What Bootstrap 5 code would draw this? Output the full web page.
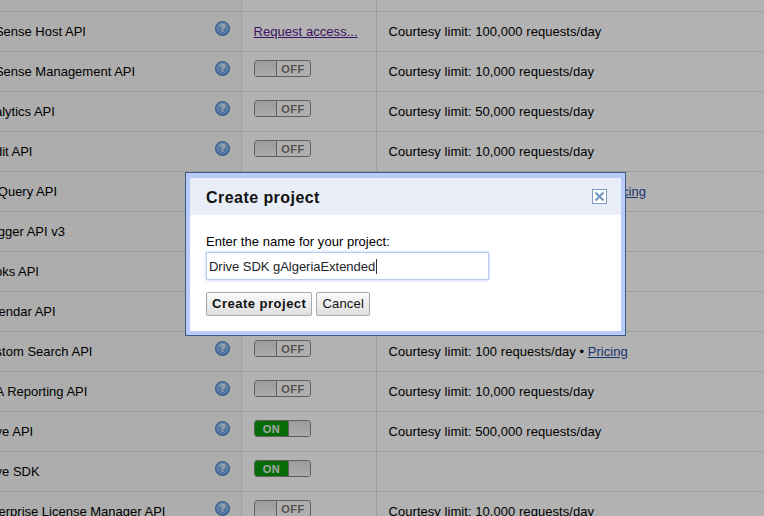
<!DOCTYPE html>
<html lang="en">
<head>
    <meta charset="UTF-8">
    <title>Services</title>
    <link href="https://cdn.jsdelivr.net/npm/bootstrap@5.3.3/dist/css/bootstrap.min.css" rel="stylesheet">
    <script src="https://cdn.jsdelivr.net/npm/bootstrap@5.3.3/dist/js/bootstrap.bundle.min.js"></script>
    <style>
        html, body { height: 100%; overflow: hidden; background: #fff; }
        body { font-family: "Liberation Sans", Arial, sans-serif; font-size: 13px; color: #000; }

        .api-table { width: 800px; margin: 0 0 0 -20px; border-collapse: collapse; table-layout: fixed; letter-spacing: .05px; }
        .api-table td { height: 40px; padding: 0; border-bottom: 1px solid #e2e2e2; border-right: 1px solid #e2e2e2; vertical-align: top; }
        .api-table tr.top-row td { height: 11px; padding: 0; }
        .api-table .name-cell { width: 261px; background: #f8f8f8; position: relative; padding: 10px 0 0 0; text-indent: -1px; letter-spacing: 0; }
        .api-table .state-cell { width: 135px; padding: 8px 0 0 12px; }
        .api-table .limit-cell { padding: 10px 0 0 12px; border-right: 0; }

        .help-ico { position: absolute; left: 235px; top: 9px; width: 15px; height: 15px; }

        .api-toggle { display: flex; width: 57px; height: 17px; border: 1px solid #8a8a8a; border-radius: 3px; overflow: hidden; font-size: 11px; font-weight: bold; line-height: 16px; letter-spacing: .5px; background: #fbfbfb; }
        .api-toggle .knob { width: 22px; background: linear-gradient(#dedede, #f6f6f6); border-right: 1px solid #8a8a8a; }
        .api-toggle .lbl { flex-grow: 1; text-align: center; color: #777; }
        .api-toggle.is-on .lbl { background: #0a9c0a; color: #ececec; flex-grow: 0; width: 35px; }
        .api-toggle.is-on .knob { flex-grow: 1; border-right: 0; border-left: 1px solid #8a8a8a; }
        .limit-cell a { color: #2a4f9e; }
        .state-cell a { color: #551a8b; }
        .state-cell .req-link { display: block; margin-top: 2px; }

        .page-shade { position: fixed; inset: 0; background: rgba(0, 0, 0, .3); }

        .project-dlg { position: fixed; left: 185px; top: 172px; width: 441px; height: 164px; background: #fff; border: 1px solid #3d5a80; box-shadow: inset 0 0 0 4px #b9cbfb, inset 0 5px 0 #b9cbfb; padding: 5px 4px 4px; }
        .dlg-head { height: 37px; background: #e8edf8; padding: 2px 14px 0 16px; }
        .dlg-title { font-size: 16px; font-weight: bold; margin: 0; letter-spacing: .45px; color: #111; }
        .dlg-close { width: 15px; height: 15px; padding: 0; border: 1px solid #7b9cc4; background: #fff; display: flex; margin-top: -2px; }
        .dlg-body { padding: 19px 16px 0; }
        .dlg-body label { display: block; margin-bottom: 3px; line-height: 15px; letter-spacing: .03px; }
        .name-input { width: 283px; height: 28px; padding: 0 2px; border: 1px solid #b9cbe8; box-shadow: 0 0 3px #b9cbfb; line-height: 27px; font-size: 13px; border-radius: 0; letter-spacing: -.03px; }
        .name-input span { border-right: 1px solid #333; padding-right: 1px; }
        .dlg-btn { height: 24px; padding: 0 5px; font-size: 13px; line-height: 22px; color: #111; background: linear-gradient(#fafafa, #dedede); border: 1px solid #aaa; border-radius: 2px; letter-spacing: .2px; }
        .dlg-btn.main { font-weight: bold; letter-spacing: .5px; }
    </style>
</head>
<body>

<table class="api-table">
    <tr class="top-row"><td class="name-cell"></td><td class="state-cell"></td><td class="limit-cell"></td></tr>
    <tr>
        <td class="name-cell">AdSense Host API <svg class="help-ico"><use href="#help"/></svg></td>
        <td class="state-cell"><a class="req-link" href="#">Request access...</a></td>
        <td class="limit-cell">Courtesy limit: 100,000 requests/day</td>
    </tr>
    <tr>
        <td class="name-cell">AdSense Management API <svg class="help-ico"><use href="#help"/></svg></td>
        <td class="state-cell"><div class="api-toggle"><div class="knob"></div><div class="lbl">OFF</div></div></td>
        <td class="limit-cell">Courtesy limit: 10,000 requests/day</td>
    </tr>
    <tr>
        <td class="name-cell">Analytics API <svg class="help-ico"><use href="#help"/></svg></td>
        <td class="state-cell"><div class="api-toggle"><div class="knob"></div><div class="lbl">OFF</div></div></td>
        <td class="limit-cell">Courtesy limit: 50,000 requests/day</td>
    </tr>
    <tr>
        <td class="name-cell">Audit API <svg class="help-ico"><use href="#help"/></svg></td>
        <td class="state-cell"><div class="api-toggle"><div class="knob"></div><div class="lbl">OFF</div></div></td>
        <td class="limit-cell">Courtesy limit: 10,000 requests/day</td>
    </tr>
    <tr>
        <td class="name-cell">BigQuery API</td>
        <td class="state-cell"></td>
        <td class="limit-cell">Courtesy limit: 10,000 requests/day • <a href="#">Pricing</a></td>
    </tr>
    <tr>
        <td class="name-cell">Blogger API v3</td>
        <td class="state-cell"></td>
        <td class="limit-cell"></td>
    </tr>
    <tr>
        <td class="name-cell">Books API</td>
        <td class="state-cell"></td>
        <td class="limit-cell"></td>
    </tr>
    <tr>
        <td class="name-cell">Calendar API</td>
        <td class="state-cell"></td>
        <td class="limit-cell"></td>
    </tr>
    <tr>
        <td class="name-cell">Custom Search API <svg class="help-ico"><use href="#help"/></svg></td>
        <td class="state-cell"><div class="api-toggle"><div class="knob"></div><div class="lbl">OFF</div></div></td>
        <td class="limit-cell">Courtesy limit: 100 requests/day • <a href="#">Pricing</a></td>
    </tr>
    <tr>
        <td class="name-cell">DFA Reporting API <svg class="help-ico"><use href="#help"/></svg></td>
        <td class="state-cell"><div class="api-toggle"><div class="knob"></div><div class="lbl">OFF</div></div></td>
        <td class="limit-cell">Courtesy limit: 10,000 requests/day</td>
    </tr>
    <tr>
        <td class="name-cell">Drive API <svg class="help-ico"><use href="#help"/></svg></td>
        <td class="state-cell"><div class="api-toggle is-on"><div class="lbl">ON</div><div class="knob"></div></div></td>
        <td class="limit-cell">Courtesy limit: 500,000 requests/day</td>
    </tr>
    <tr>
        <td class="name-cell">Drive SDK <svg class="help-ico"><use href="#help"/></svg></td>
        <td class="state-cell"><div class="api-toggle is-on"><div class="lbl">ON</div><div class="knob"></div></div></td>
        <td class="limit-cell"></td>
    </tr>
    <tr>
        <td class="name-cell">Enterprise License Manager API <svg class="help-ico"><use href="#help"/></svg></td>
        <td class="state-cell"><div class="api-toggle"><div class="knob"></div><div class="lbl">OFF</div></div></td>
        <td class="limit-cell">Courtesy limit: 10,000 requests/day</td>
    </tr>
</table>

<svg width="0" height="0" class="d-block">
    <defs>
        <radialGradient id="helpFill" cx="50%" cy="35%" r="65%">
            <stop offset="0" stop-color="#a0c6f0"/>
            <stop offset="1" stop-color="#4f8cd6"/>
        </radialGradient>
        <symbol id="help" viewBox="0 0 15 15">
            <circle cx="7.5" cy="7.5" r="7.1" fill="url(#helpFill)" stroke="#3f78c0" stroke-width=".8"/>
            <circle cx="7.5" cy="7.5" r="5.2" fill="none" stroke="#cfe0f6" stroke-width=".5"/>
            <text x="7.5" y="11" text-anchor="middle" font-family="Liberation Sans" font-size="10" font-weight="bold" fill="#eef4fc">?</text>
        </symbol>
    </defs>
</svg>

<div class="page-shade"></div>

<div class="project-dlg">
    <div class="dlg-head d-flex align-items-center justify-content-between">
        <h1 class="dlg-title">Create project</h1>
        <button type="button" class="dlg-close" aria-label="Close">
            <svg width="13" height="13" viewBox="0 0 13 13"><path d="M2.5 2.5l8 8M10.5 2.5l-8 8" stroke="#6f93bd" stroke-width="2" fill="none"/></svg>
        </button>
    </div>
    <div class="dlg-body">
        <label>Enter the name for your project:</label>
        <div class="name-input form-control"><span>Drive SDK gAlgeriaExtended</span></div>
        <div class="d-flex gap-1 mt-2 pt-1">
            <button type="button" class="dlg-btn main">Create project</button>
            <button type="button" class="dlg-btn">Cancel</button>
        </div>
    </div>
</div>

</body>
</html>
